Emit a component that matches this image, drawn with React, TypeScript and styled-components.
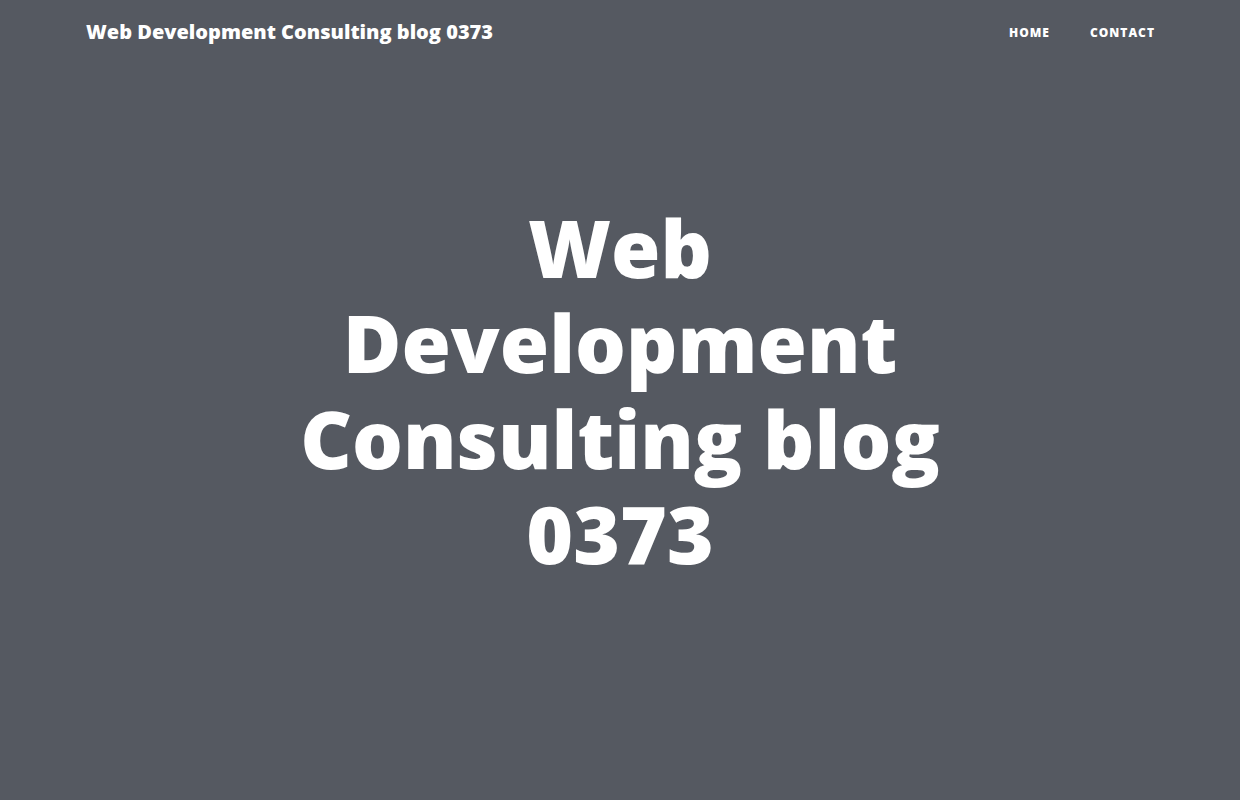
import React from 'react';
import styled, { createGlobalStyle } from 'styled-components';

const GlobalStyle = createGlobalStyle`
  html, body {
    margin: 0;
    padding: 0;
    background-color: #555961;
  }
  body {
    font-family: 'Open Sans', 'Liberation Sans', sans-serif;
    color: #fff;
    min-height: 100vh;
  }
  * { box-sizing: border-box; }
`;

const links = ['Home', 'Contact'];

const App = () => {
  return (
    <>
      <GlobalStyle />
      <Page>
        <NavBar>
          <Brand href="#">Web Development Consulting blog 0373</Brand>
          <NavList>
            {links.map((label) => (
              <NavItem key={label}>
                <NavLink href="#">{label}</NavLink>
              </NavItem>
            ))}
          </NavList>
        </NavBar>
        <Masthead>
          <SiteHeading>Web Development Consulting blog 0373</SiteHeading>
        </Masthead>
      </Page>
    </>
  );
};

export default App;

const Page = styled.div`
  min-height: 100vh;
  background-color: #555961;
`;

const NavBar = styled.nav`
  height: 63px;
  padding: 0 85px 0 86px;
  display: flex;
  align-items: center;
  justify-content: space-between;
`;

const Brand = styled.a`
  font-family: 'Open Sans', sans-serif;
  font-weight: 800;
  font-size: 20px;
  color: #fff;
  text-decoration: none;
`;

const NavList = styled.ul`
  list-style: none;
  margin: 0;
  padding: 0 0 2px;
  display: flex;
  gap: 40px;
`;

const NavItem = styled.li`
  display: block;
`;

const NavLink = styled.a`
  font-family: 'Open Sans', sans-serif;
  font-size: 12px;
  font-weight: 800;
  letter-spacing: 1px;
  text-transform: uppercase;
  color: #fff;
  text-decoration: none;
`;

const Masthead = styled.header`
  padding: 136px 0 100px;
  display: flex;
  justify-content: center;
`;

const SiteHeading = styled.h1`
  margin: 0;
  max-width: 730px;
  text-align: center;
  font-family: 'Open Sans', sans-serif;
  font-weight: 800;
  font-size: 80px;
  line-height: 95.3px;
  color: #fff;
`;
